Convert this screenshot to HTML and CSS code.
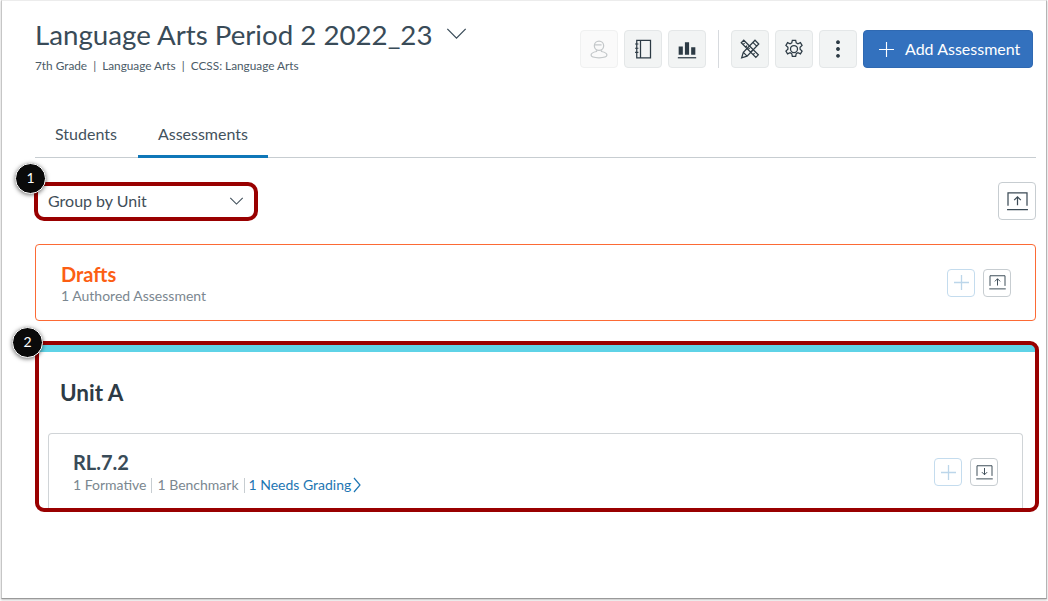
FILE: index.html
```html
<!DOCTYPE html>
<html lang="en">
<head>
<meta charset="utf-8">
<title>Language Arts Period 2 2022_23</title>
<link rel="stylesheet" href="styles.css">
</head>
<body>
<div class="frame">
  <header class="header">
    <div class="heading">
      <div class="title-row">
        <h1 class="title">Language Arts Period 2 2022_23</h1>
        <svg class="title-caret" viewBox="0 0 22 12"><path d="M1 1l10 10L21 1"/></svg>
      </div>
      <p class="meta">7th Grade&nbsp; |&nbsp; Language Arts&nbsp; |&nbsp; CCSS: Language Arts</p>
    </div>
    <div class="toolbar">
      <button class="tool tool-disabled">
        <svg viewBox="0 0 24 24" class="ico ico-muted"><circle cx="12" cy="8" r="5.6"/><path d="M6.6 7h8.5M9 13.5v1.5c-3 .6-6.500 1.800-6.500 4.300 0 2.200 2.500 3.200 9.500 3.200s9.500-1 9.500-3.200c0-2.500-3.500-3.700-6.500-4.300v-1.500"/></svg>
      </button>
      <button class="tool">
        <svg viewBox="0 0 24 24" class="ico"><path d="M4.500 1.500h16.500v21H4.500zM9 1.500v21"/><path class="thin" d="M2.500 6h4M2.500 11h4M2.500 16h4"/></svg>
      </button>
      <button class="tool">
        <svg viewBox="0 0 24 24" class="ico"><path class="solid" d="M2 9h5v10H2zM9.500 4h5v15h-5zM17 10h5v9h-5z"/><path d="M1 22.500h22"/></svg>
      </button>
      <span class="tool-sep"></span>
      <button class="tool">
        <svg viewBox="0 0 24 24" class="ico"><path d="M4.500 1.500L1.500 4.500 19 22l3-3zM3.500 7l2-2M6.500 10l2-2M9.500 13l2-2M12.500 16l2-2M15.500 19l2-2"/><path d="M18 1.500L4 16l-2 6.500 6.500-2L22.500 6z M15.500 4l4.500 4.500M4 16l4.500 4.500"/></svg>
      </button>
      <button class="tool">
        <svg viewBox="0 0 24 24" class="ico"><circle cx="12" cy="12" r="4.200"/><path d="M10 1.500h4l.7 3.200 2 1 3-1.300 2 3.400-2.400 2.200v2.200l2.400 2.200-2 3.400-3-1.300-2 1-.7 3.200h-4l-.7-3.200-2-1-3 1.300-2-3.400 2.400-2.200v-2.200L2.300 7.800l2-3.400 3 1.300 2-1z"/></svg>
      </button>
      <button class="tool">
        <svg viewBox="0 0 24 24" class="ico"><path class="solid" d="M12 1.500a2.300 2.300 0 1 0 .01 0zM12 9.700a2.300 2.300 0 1 0 .01 0zM12 17.900a2.300 2.300 0 1 0 .01 0z"/></svg>
      </button>
      <button class="add-btn">
        <svg viewBox="0 0 16 16" class="add-plus"><path d="M8 0v16M0 8h16"/></svg>
        <span>Add Assessment</span>
      </button>
    </div>
  </header>

  <nav class="tabs">
    <a class="tab">Students</a>
    <a class="tab tab-active">Assessments</a>
  </nav>

  <div class="filter-row">
    <div class="select">
      <span>Group by Unit</span>
      <svg class="select-caret" viewBox="0 0 16 9"><path d="M1 1l7 7 7-7"/></svg>
      <span class="highlight highlight-select"></span>
      <span class="badge badge-one">1</span>
    </div>
    <button class="square square-lg">
      <svg viewBox="0 0 22 20" class="tray"><path d="M1 14.500V1h20v13.500M0 18.500h22M11 14V5M7.500 8.500L11 5l3.500 3.500"/></svg>
    </button>
  </div>

  <section class="drafts">
    <div class="drafts-text">
      <h2 class="drafts-title">Drafts</h2>
      <p class="sub">1 Authored Assessment</p>
    </div>
    <div class="actions">
      <button class="square square-plus"><svg viewBox="0 0 16 16" class="plus"><path d="M8 0v16M0 8h16"/></svg></button>
      <button class="square">
        <svg viewBox="0 0 22 20" class="tray tray-sm"><path d="M1 14.500V1h20v13.500M0 18.500h22M11 14V5M7.500 8.500L11 5l3.500 3.500"/></svg>
      </button>
    </div>
  </section>

  <section class="unit">
    <h2 class="unit-title">Unit A</h2>
    <div class="standard">
      <div>
        <h3 class="standard-title">RL.7.2</h3>
        <p class="sub stats"><span>1 Formative</span><i></i><span>1 Benchmark</span><i class="sep-tight"></i><a class="grading">1 Needs Grading<svg viewBox="0 0 8 16" class="chev"><path d="M1 1l6 7-6 7"/></svg></a></p>
      </div>
      <div class="actions">
        <button class="square square-plus"><svg viewBox="0 0 16 16" class="plus"><path d="M8 0v16M0 8h16"/></svg></button>
        <button class="square">
          <svg viewBox="0 0 22 20" class="tray tray-sm"><path d="M1 14.500V1h20v13.500M0 18.500h22M11 4v9M7.500 9.500L11 13l3.500-3.500"/></svg>
        </button>
      </div>
    </div>
    <span class="highlight highlight-unit"></span>
    <span class="badge badge-two">2</span>
  </section>
</div>
</body>
</html>
```
FILE: styles.css
```css
* { box-sizing: border-box; }
html, body { margin: 0; padding: 0; background: #fff; }
body { font-family: Lato, "Noto Sans", sans-serif; color: #2d3b45; width: 1048px; height: 601px; overflow: hidden; }
h1, h2, h3, p { margin: 0; font-weight: 400; }
button { font: inherit; cursor: pointer; padding: 0; }

.frame {
  width: 1046px; height: 599px; margin-left: 1px; padding: 0 10px 0 33px;
  border-top: 1px solid #ececec; border-left: 1px solid #c6c6c6; border-right: 1px solid #b4b4b4; border-bottom: 1px solid #9a9a9a;
  box-shadow: 0 1px 2px rgba(0,0,0,.25);
}

.header { display: flex; justify-content: space-between; padding-top: 16px; height: 122px; }
.title-row { display: flex; align-items: center; gap: 14px; }
.title { font-size: 27.7px; line-height: 36px; color: #394b58; }
.title-caret { width: 21px; height: 11px; margin-top: -3px; fill: none; stroke: #394b58; stroke-width: 1.4; }
.meta { font-size: 11.8px; line-height: 16px; margin-top: 5px; color: #4b5b67; }

.toolbar { display: flex; align-items: flex-start; gap: 6px; margin-top: 13px; margin-right: 3px; }
.tool { width: 38px; height: 38px; border: 1px solid #e4e7e8; border-radius: 4px; background: #f2f4f4; display: flex; align-items: center; justify-content: center; }
.tool-disabled { background: #fafafa; border-color: #f0f1f1; }
.ico { width: 20px; height: 20px; fill: none; stroke: #2d3b45; stroke-width: 1.5; }
.ico .solid { fill: #2d3b45; stroke: none; }
.ico .thin { stroke-width: 1.3; }
.ico-muted { stroke: #c4c8ca; }
.tool-sep { width: 1px; height: 38px; background: #d7dade; margin: 0 6px; }
.add-btn { width: 170px; height: 38px; background: #3371be; border: 1px solid #2f69b2; border-radius: 4px; color: #fff; font-size: 16px; display: flex; align-items: center; gap: 11px; padding: 0 0 1px 15px; }
.add-plus { width: 15px; height: 15px; margin-top: 1px; fill: none; stroke: #fff; stroke-width: 1.2; }

.tabs { display: flex; gap: 1px; height: 35px; border-bottom: 1px solid #c7cdd1; }
.tab { padding: 0 20px; line-height: 22px; font-size: 16px; color: #43525d; height: 35px; }
.tab-active { border-bottom: 3px solid #0f77b8; }

.filter-row { display: flex; justify-content: space-between; align-items: center; margin-top: 24px; height: 38px; }
.select { position: relative; width: 222px; height: 38px; display: flex; align-items: center; justify-content: space-between; padding: 0 13px 2px 13px; font-size: 16px; color: #3f4e59; }
.select-caret { width: 15px; height: 8px; margin-top: 1px; fill: none; stroke: #3f4e59; stroke-width: 1.2; }

.highlight { position: absolute; border: 4px solid #990000; pointer-events: none; }
.highlight-select { inset: 0 -1px -1px -1px; border-radius: 10px; }
.badge { position: absolute; width: 31px; height: 31px; border-radius: 50%; background: #0a0a0a; color: #fff; border: 1px solid #fff; box-shadow: 0 1px 4px rgba(0,0,0,.55); font-size: 14px; line-height: 28px; text-align: center; }
.badge-one { left: -20px; top: -19px; }
.badge-two { left: -25px; top: -25px; }

.square { width: 28px; height: 28px; border: 1px solid #c7cdd1; border-radius: 4px; background: #fff; display: flex; align-items: center; justify-content: center; }
.square-lg { width: 38px; height: 38px; }
.square-plus { border-color: #c4dcee; }
.plus { width: 15px; height: 15px; fill: none; stroke: #bcd6ea; stroke-width: 1.4; }
.tray { width: 21px; height: 19px; fill: none; stroke: #3b4a55; stroke-width: 1.3; }
.tray-sm { width: 17px; height: 15px; }

.drafts { display: flex; justify-content: space-between; align-items: center; height: 77px; margin-top: 24px; padding: 0 24px 0 25px; border: 1px solid #fc6a35; border-radius: 4px; }
.drafts-text { padding-top: 3px; }
.drafts-title { font-size: 20px; line-height: 24px; font-weight: 700; color: #fc5e13; margin-top: -1px; }
.sub { font-size: 14px; line-height: 20px; color: #7b8790; }
.actions { display: flex; gap: 8px; }

.unit { position: relative; width: 1000px; height: 165px; margin: 24px 0 0 2px; border-top: 7px solid #5fd3e7; padding: 0 14px 0 11px; }
.unit-title { font-size: 22.500px; line-height: 30px; font-weight: 700; padding: 26px 0 0 12px; color: #2d3b45; height: 81px; }
.standard { display: flex; justify-content: space-between; align-items: flex-start; height: 78px; padding: 16px 24px 0 24px; border: 1px solid #d0d4d7; border-bottom: 0; border-radius: 4px 4px 0 0; }
.standard .actions { margin-top: 8px; }
.standard-title { font-size: 20px; line-height: 24px; font-weight: 700; color: #394b58; }
.stats { display: flex; align-items: center; margin-top: 1px; }
.stats i { width: 1px; height: 15px; background: #c7cdd1; margin: 0 5px; }
.stats .sep-tight { margin-right: 4px; }
.grading { color: #1d76b3; display: inline-flex; align-items: center; gap: 2px; }
.chev { width: 8px; height: 16px; fill: none; stroke: #1d76b3; stroke-width: 1.2; }
.highlight-unit { left: -2px; right: -2px; top: -11px; bottom: -2px; border-radius: 0 9px 9px 9px; }
```
